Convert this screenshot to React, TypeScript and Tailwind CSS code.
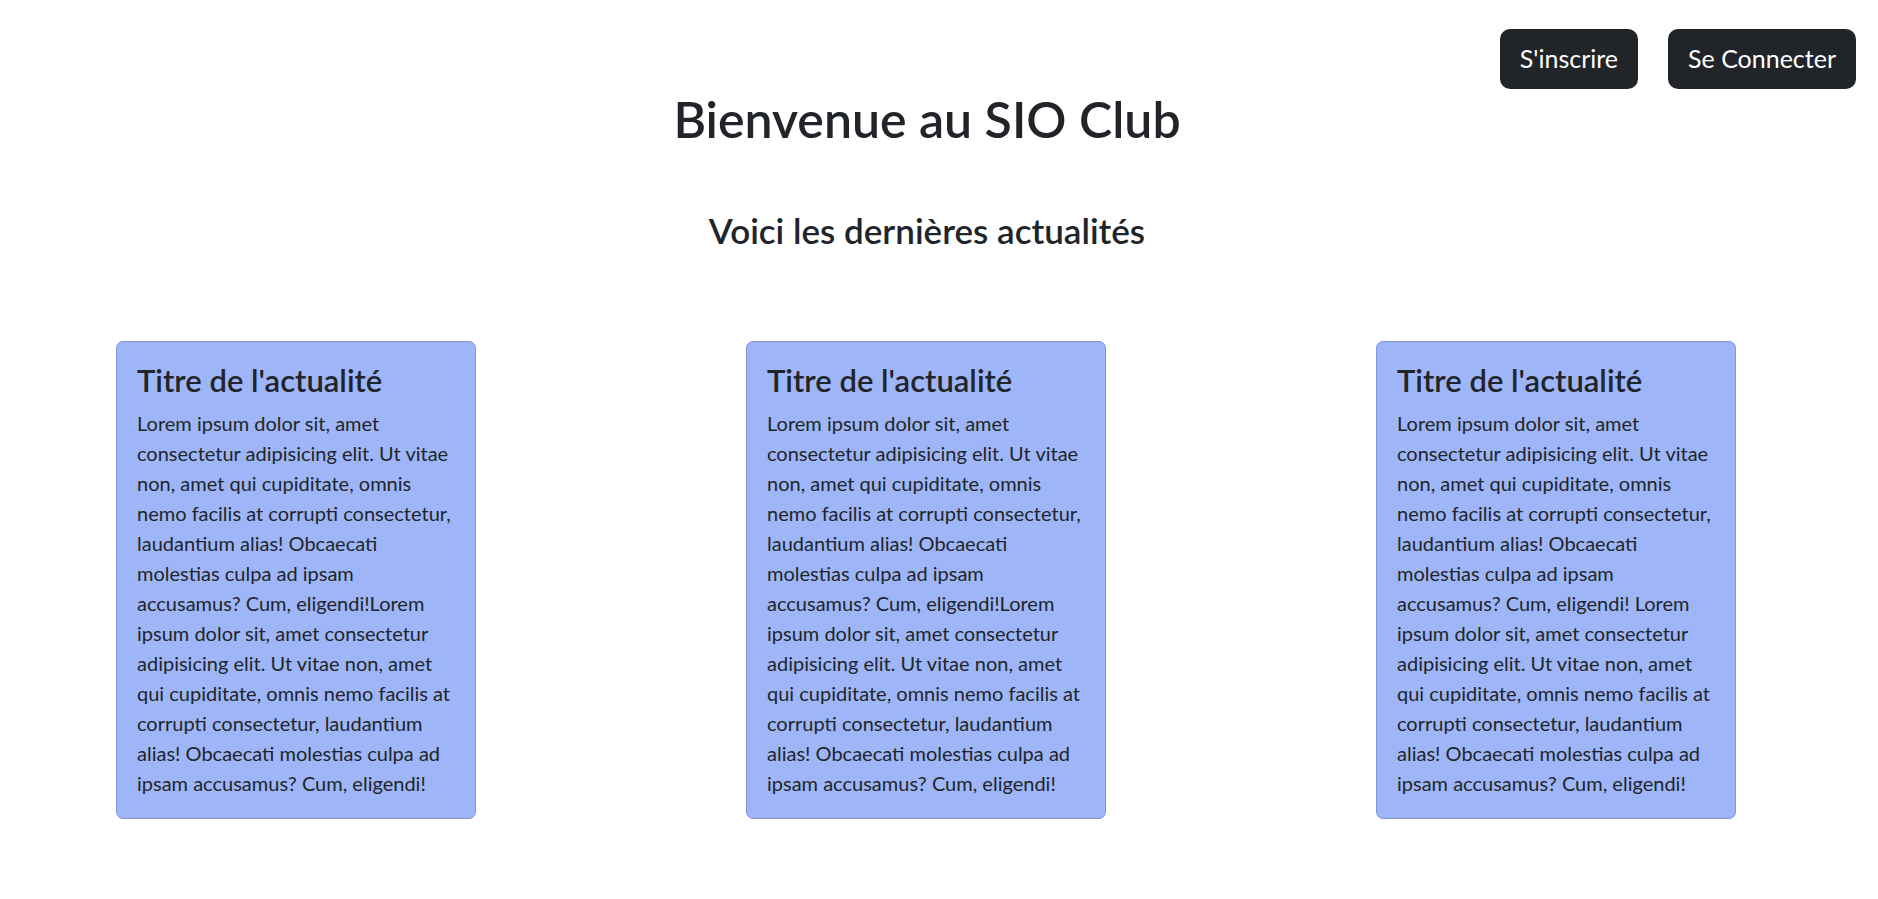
const lines = [
  "Lorem ipsum dolor sit, amet",
  "consectetur adipisicing elit. Ut vitae",
  "non, amet qui cupiditate, omnis",
  "nemo facilis at corrupti consectetur,",
  "laudantium alias! Obcaecati",
  "molestias culpa ad ipsam",
  "accusamus? Cum, eligendi!Lorem",
  "ipsum dolor sit, amet consectetur",
  "adipisicing elit. Ut vitae non, amet",
  "qui cupiditate, omnis nemo facilis at",
  "corrupti consectetur, laudantium",
  "alias! Obcaecati molestias culpa ad",
  "ipsam accusamus? Cum, eligendi!",
];

function NewsCard({ spaced }: { spaced?: boolean }) {
  const text = spaced
    ? lines.map((l) => l.replace("eligendi!Lorem", "eligendi! Lorem"))
    : lines;
  return (
    <div className="w-[360px] rounded-[7px] border border-[#7f97d9] bg-[#9eb6f7] p-5">
      <h4 className="mb-[10px] text-[31px] font-semibold leading-[36px]">Titre de l'actualité</h4>
      <p className="text-[20px] leading-[30px]">
        {text.map((l, i) => (
          <span key={i} className="block whitespace-nowrap">
            {l}
          </span>
        ))}
      </p>
    </div>
  );
}

export default function App() {
  return (
    <div className="min-h-screen bg-white font-['Lato',sans-serif] text-[#212529]">
      <div className="flex justify-end gap-[30px] pr-[22px] pt-[29px]">
        <button className="h-[60px] rounded-[10px] bg-[#212529] px-5 text-[25px] text-white">
          S'inscrire
        </button>
        <button className="h-[60px] rounded-[10px] bg-[#212529] px-5 text-[25px] text-white">
          Se Connecter
        </button>
      </div>

      <div className="pr-[24px] text-center">
        <h1 className="text-[50px] font-semibold leading-[60px]">Bienvenue au SIO Club</h1>
        <h3 className="mt-[60px] text-[35px] font-semibold leading-[42px]">
          Voici les dernières actualités
        </h3>
      </div>

      <div className="mt-[90px] flex gap-[270px] pl-[116px]">
        <NewsCard />
        <NewsCard />
        <NewsCard spaced />
      </div>
    </div>
  );
}
